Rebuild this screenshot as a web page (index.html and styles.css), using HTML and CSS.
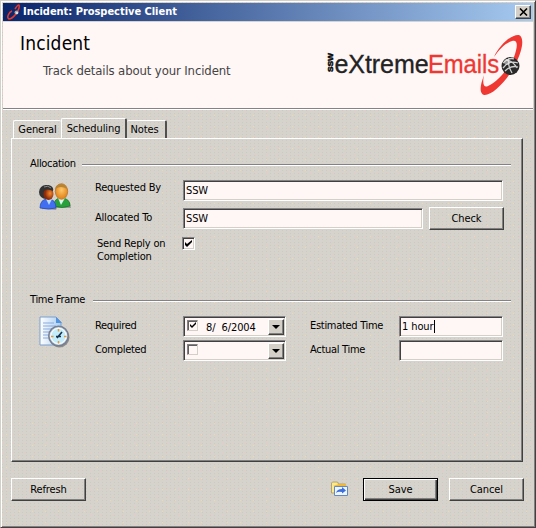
FILE: index.html
```html
<!DOCTYPE html>
<html lang="en">
<head>
<meta charset="utf-8">
<title>Incident: Prospective Client</title>
<link rel="stylesheet" href="styles.css">
</head>
<body>
<main class="window">
  <header class="titlebar">
    <svg class="app-icon" width="16" height="16" viewBox="0 0 16 16"><path d="M9 5C12 0 14 0 13 4C12 9 6 15 3 15C0 14 3 8 6 7" fill="none" stroke="#e8382c" stroke-width="1.5"/><circle cx="10.500" cy="8.500" r="2" fill="#aaa"/><circle cx="11" cy="9" r="1" fill="#eee"/></svg>
    <h1 class="caption">Incident: Prospective Client</h1>
    <button class="close" aria-label="Close"><svg width="9" height="8" viewBox="0 0 9 8"><path d="M1 .5 8 7.500M8 .5 1 7.500" stroke="#000" stroke-width="1.600"/></svg></button>
  </header>
  <section class="banner">
    <div class="banner-text">
      <h2>Incident</h2>
      <p>Track details about your Incident</p>
    </div>
    <svg class="logo" width="200" height="64" viewBox="324 33 200 64">
      <text class="logo-ssw" transform="translate(333 72) rotate(-90)" textLength="19" lengthAdjust="spacingAndGlyphs">SSW</text>
      <text class="logo-word" x="334.500" y="73" textLength="94" lengthAdjust="spacingAndGlyphs">eXtreme</text>
      <text class="logo-word red" x="428" y="73" textLength="71" lengthAdjust="spacingAndGlyphs">Emails</text>
      <path d="M494 57C500 44 512 34 519 35C525 38 522 51 516 63C508 80 492 96 484 95C479 93 480 86 484 75C482 84 484 88 488 86C496 83 509 69 514 57C518 46 518 39 512 41C505 43 499 50 494 57Z" fill="#ee3831"/>
      <circle cx="510.500" cy="66" r="9" fill="#292929"/>
      <path d="M503 63Q509 57 514 59M503 68Q509 60 518 63M506 60Q513 61 517 68M509 58Q507 64 512 73M505 71Q511 65 518 67" fill="none" stroke="#d0d0d0" stroke-width="1.300"/>
      <circle cx="507" cy="62" r="3" fill="#eee" opacity=".55"/>
    </svg>
  </section>
  <section class="content">
    <nav class="tabs"><button class="tab general">General</button><button class="tab active">Scheduling</button><button class="tab notes">Notes</button></nav>
    <div class="panel">
      <div class="legend"><span class="t-alloc">Allocation</span><hr></div>
      <div class="allocation">
        <svg class="people" width="33" height="28" viewBox="0 0 33 28">
          <defs>
            <radialGradient id="skinA" cx=".65" cy=".45"><stop stop-color="#f58a2c"/><stop offset="1" stop-color="#8c2908"/></radialGradient>
            <radialGradient id="skinB" cx=".5" cy=".4"><stop stop-color="#ffc86c"/><stop offset="1" stop-color="#e48a20"/></radialGradient>
          </defs>
          <path d="M3 26C3 19 9 17 12 18L18 20 23 15Q32 17 32 25L18 25 17 27Z" fill="#777" opacity=".6"/>
          <path d="M15 23Q15 15 22 15Q31 15 31 23Q23 26 15 23Z" fill="#28a13b" stroke="#16742a" stroke-width=".7"/>
          <path d="m19 15 3 7 4-7Z" fill="#d9f6f0"/>
          <ellipse cx="22.500" cy="8.500" rx="6.200" ry="7.800" fill="url(#skinB)" stroke="#b66b1e" stroke-width=".7"/>
          <path d="M16 6Q17 1 22 1Q27 1 28 6Q22 2 16 6Z" fill="#b78335"/>
          <path d="M1 25Q1 16 9 16Q17 16 17 25Q10 27 1 25Z" fill="#416ff0" stroke="#1c43b3" stroke-width=".7"/>
          <path d="m7 16 3 6 3-6Z" fill="#b8dcff"/>
          <ellipse cx="7" cy="9" rx="7" ry="7" fill="#333"/>
          <ellipse cx="9.500" cy="11" rx="5" ry="6" fill="url(#skinA)"/>
          <path d="M2 7Q6 0 12 3Q15 5 14 8Q7 4 2 10Z" fill="#333"/><path d="M5 4Q9 2 12 5" stroke="#888" fill="none"/>
        </svg>
        <div class="rows">
          <div class="row r1"><label>Requested By</label><div class="field wide">SSW</div></div>
          <div class="row r2"><label>Allocated To</label><div class="field mid">SSW</div><button class="btn check">Check</button></div>
          <div class="row r3"><label class="two-line">Send Reply on<br>Completion</label><span class="checkbox"><svg width="7" height="7" viewBox="0 0 7 7"><path d="M0 2v3l2 2 5-5V0L2 4Z"/></svg></span></div>
        </div>
      </div>
      <div class="legend second"><span class="t-frame">Time Frame</span><hr></div>
      <div class="timeframe">
        <svg class="clock" width="32" height="32" viewBox="0 0 32 32">
          <defs><linearGradient id="page" x2="1"><stop stop-color="#fff"/><stop offset="1" stop-color="#a9cdf0"/></linearGradient></defs>
          <path d="M1 1H17L22 6V29H1Z" fill="url(#page)" stroke="#7a9fd0"/><path d="M17 1v6h6Z" fill="#5294df"/>
          <path d="M4 7h11M4 10h13M4 13h12M4 16h8M4 19h6M4 22h6" stroke="#89a9df"/>
          <circle cx="20.500" cy="21.500" r="10" fill="#555" opacity=".55"/>
          <circle cx="19.500" cy="20" r="9.700" fill="#d4e8f5" stroke="#777f91" stroke-width="1.600"/>
          <circle cx="19.500" cy="20" r="7.600" fill="#c4edfb" stroke="#fff"/>
          <path d="M19.500 13v2.500M19.500 25v2.500M12 20.500h2.500M25 20.500h2.500" stroke="#e69738" stroke-width="1.500"/>
          <path d="m18 22 5-6M17 20.500h5" stroke="#19324e" stroke-width="1.600"/>
        </svg>
        <label>Required</label>
        <div class="field date"><span class="mini"><svg width="7" height="7" viewBox="0 0 7 7"><path d="M1 2v2l2 2 4-4V0L3 4Z"/></svg></span><span class="date-text">8/&nbsp; 6/2004</span><button class="drop" aria-label="Open calendar"><i></i></button></div>
        <label class="t-est">Estimated Time</label><div class="field short">1 hour<span class="caret"></span></div>
        <label class="t-comp">Completed</label>
        <div class="field date"><span class="mini"></span><span class="date-text"></span><button class="drop" aria-label="Open calendar"><i></i></button></div>
        <label class="t-act">Actual Time</label><div class="field short"></div>
      </div>
    </div>
    <footer class="actions">
      <button class="btn refresh">Refresh</button>
      <svg class="folder" width="17" height="16" viewBox="0 0 17 16"><path d="M.5 12V2l1-1h5l1 2h7v9Z" fill="#f9e991" stroke="#b7a36a"/><path d="M2 5h13V3H8z" fill="#f1b737"/><path d="M3.500 5.500h13v9h-13z" fill="#edf6ff" stroke="#6688bd"/><path d="M5 12q1-4 6-4V6l4 3.500-4 3V11Q7 10 5 12Z" fill="#3d6fdc"/></svg>
      <button class="btn save">Save</button>
      <button class="btn cancel">Cancel</button>
    </footer>
  </section>
</main>
</body>
</html>
```
FILE: styles.css
```css
* { box-sizing: border-box; }
body { margin: 0; }
h1, h2, p, hr { margin: 0; }
button { font: inherit; color: inherit; letter-spacing: inherit; padding: 0; }
svg { display: block; flex: none; }

.window {
  width: 536px;
  height: 528px;
  border: 1px solid #d4d0c8;
  border-right-color: #404040;
  border-bottom-color: #404040;
  box-shadow: inset 1px 1px #fff, inset -1px -1px #808080;
  padding: 2px;
  overflow: hidden;
  font: 11px/13px "DejaVu Sans Condensed", "DejaVu Sans", sans-serif;
  font-stretch: condensed;
  letter-spacing: -0.1px;
  color: #000;
  background-color: #d6d3cc;
  background-image:
    radial-gradient(circle at 1.5px 1.5px, #eec6c2 0.5px, transparent 0.8px),
    radial-gradient(circle at 5.5px 4.5px, #edd8b2 0.5px, transparent 0.8px),
    radial-gradient(circle at 1.5px 1.5px, #cbcbc6 0.5px, transparent 0.8px);
  background-size: 11px 9px, 13px 11px, 4px 3px;
}

.titlebar {
  height: 18px;
  display: flex;
  align-items: center;
  padding: 0 2px 0 3px;
  background: linear-gradient(90deg, #0a246a, #a6caf0);
  color: #fff;
}
.caption { flex: 1; font-size: 11px; line-height: 14px; padding-left: 1px; letter-spacing: -0.03px; }
.close {
  width: 16px;
  height: 14px;
  display: grid;
  place-items: center;
  background: #d4d0c8;
  border: 1px solid #fff;
  border-right-color: #404040;
  border-bottom-color: #404040;
  box-shadow: inset -1px -1px #808080;
}

.banner {
  height: 88px;
  margin-top: 1px;
  display: flex;
  justify-content: space-between;
  background: #fff6f6;
  border-bottom: 1px solid #fff;
  box-shadow: inset 0 -1px #848284;
  padding: 11px 9px 0 17px;
}
.banner h2 { font: 19px/20px "DejaVu Sans Condensed", sans-serif; letter-spacing: 0.15px; }
.banner p { font-size: 13px; line-height: 16px; margin: 10px 0 0 23px; color: #444; white-space: nowrap; letter-spacing: -0.12px; }
.logo-word { font: 25px "Liberation Sans", sans-serif; fill: #232323; stroke: #232323; stroke-width: .3px; }
.logo-word.red { fill: #ee3831; stroke: #ee3831; }
.logo-ssw { font: bold 8px "Liberation Sans", sans-serif; stroke: #111; stroke-width: .5px; }

.content { padding: 8px 9px 0 8px; }
.tabs { display: flex; align-items: flex-end; height: 20px; padding-left: 2px; }
.tab {
  height: 18px;
  background: transparent;
  border: 1px solid #fff;
  border-bottom: 0;
  border-radius: 2px 2px 0 0;
  text-align: center;
  white-space: nowrap;
}
.general { width: 48px; border-right: 0; }
.tab.active { width: 66px; height: 20px; padding-bottom: 1px; border-right: 2px solid #505050; }
.notes { width: 40px; border-left: 0; border-right: 2px solid #505050; padding-right: 3px; }

.panel {
  height: 324px;
  margin-right: 1px;
  border: 1px solid #fff;
  border-right: 1px solid #404040;
  border-bottom: 1px solid #404040;
  box-shadow: inset -1px -1px #808080;
  padding: 18px 11px 0 18px;
}
.legend { height: 13px; display: flex; align-items: center; white-space: nowrap; }
.legend hr { height: 2px; border: 0; background: #848284; border-bottom: 1px solid #fff; flex: 1; margin-top: 3px; }
.legend span { flex: none; }
.t-alloc { width: 52px; letter-spacing: -0.3px; }
.t-frame { width: 63px; letter-spacing: -0.3px; }
.allocation { display: flex; height: 123px; padding: 10px 0 0 9px; }
.people { margin-top: 3px; }
.rows { margin-left: 23px; }
.row { display: flex; align-items: flex-start; }
.row label { width: 88px; padding-top: 1px; white-space: nowrap; flex: none; letter-spacing: -0.2px; }
.row .two-line { padding: 0 0 0 2px; width: 87px; }
.r1 { height: 27px; }
.r2 { height: 30px; }
.r2 label { padding-top: 4px; }
.r2 .field { margin-top: 1px; }
.field {
  height: 21px;
  background: #fff6f6;
  border: 1px solid #848284;
  border-right-color: #fff;
  border-bottom-color: #fff;
  box-shadow: inset 1px 1px #404040, inset -1px -1px #d4d0c8;
  padding: 3px 2px 2px;
  display: flex;
  line-height: 14px;
  white-space: nowrap;
}
.wide { width: 320px; }
.mid { width: 240px; }
.short { width: 104px; }
.btn {
  width: 75px;
  height: 23px;
  flex: none;
  background: transparent;
  border: 1px solid #fff;
  border-right-color: #404040;
  border-bottom-color: #404040;
  box-shadow: inset -1px -1px #808080;
  text-align: center;
}
.check { margin-left: 6px; }
.checkbox, .mini {
  width: 13px;
  height: 13px;
  background: #fff6f6;
  border: 1px solid #848284;
  border-right-color: #fff;
  border-bottom-color: #fff;
  box-shadow: inset 1px 1px #404040, inset -1px -1px #d4d0c8;
  display: grid;
  place-items: center;
  flex: none;
}

.timeframe {
  display: grid;
  grid-template-columns: 65px 88px 103px 24px 89px 104px;
  grid-template-rows: 24px 24px;
  padding-top: 10px;
  white-space: nowrap;
}
.clock { grid-row: 1 / 3; margin-left: 9px; }
.timeframe label { padding-top: 3px; letter-spacing: -0.3px; }
.t-est, .t-act { grid-column: 5; }
.t-comp { grid-column: 2; }
.date { width: 103px; padding: 2px 1px 2px 2px; }
.mini { width: 11px; height: 11px; margin: 1px 0 0 1px; border-color: #848284 #d4d0c8 #d4d0c8 #848284; box-shadow: inset 1px 1px #606060; }
.date-text { flex: 1; padding: 2px 0 0 8px; letter-spacing: -0.1px; }
.drop {
  width: 16px;
  height: 16px;
  background: #d4d0c8;
  border: 1px solid #fff;
  border-right-color: #404040;
  border-bottom-color: #404040;
  box-shadow: inset -1px -1px #808080;
  display: grid;
  place-items: center;
}
.drop i { border: 4px solid transparent; border-top-color: #000; border-bottom: 0; }
.caret { width: 1px; height: 13px; background: #000; }

.actions { display: flex; height: 23px; margin-top: 16px; }
.folder { margin: 3px 15px 0 auto; }
.save { border-color: #000; box-shadow: inset 1px 1px #fff, inset -1px -1px #404040, inset -2px -2px #808080; }
.cancel { margin-left: 11px; }
```
